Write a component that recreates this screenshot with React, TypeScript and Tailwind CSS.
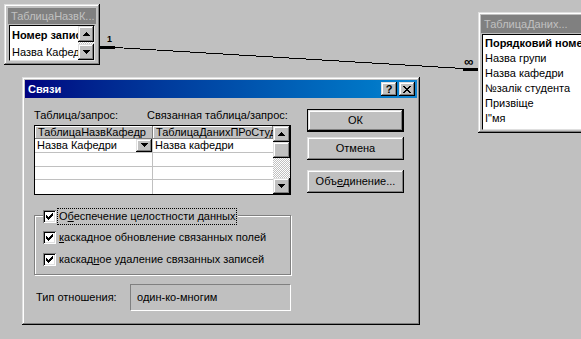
import React from "react"

const raised = "bg-[#c0c0c0] shadow-[inset_-1px_-1px_#000000,inset_1px_1px_#dfdfdf,inset_-2px_-2px_#808080,inset_2px_2px_#ffffff]"
const thin = "bg-[#c0c0c0] shadow-[inset_-1px_-1px_#808080,inset_1px_1px_#ffffff]"
const dither = "bg-[image:repeating-conic-gradient(#ffffff_0%_25%,#c0c0c0_0%_50%)] bg-size-[2px_2px]"

const Arrow = ({ down }: { down?: boolean }) => (
    <svg width="7" height="4" viewBox="0 0 7 4" shapeRendering="crispEdges">
        {[0, 1, 2, 3].map(i => (
            <rect key={i} x={3 - i} y={down ? 3 - i : i} width={1 + 2 * i} height="1" fill="#000" />
        ))}
    </svg>
)

const Check = () => (
    <div className="w-[13px] h-[13px] bg-white shrink-0 shadow-[inset_1px_1px_#808080,inset_-1px_-1px_#ffffff,inset_2px_2px_#000000,inset_-2px_-2px_#dfdfdf] flex items-center justify-center">
        <svg width="7" height="7" viewBox="0 0 7 7" shapeRendering="crispEdges">
            <path d="M0 2h1v3h-1zM1 3h1v3h-1zM2 4h1v3h-1zM3 3h1v3h-1zM4 2h1v3h-1zM5 1h1v3h-1zM6 0h1v3h-1z" fill="#000" />
        </svg>
    </div>
)

const Button = ({ children, primary }: { children: React.ReactNode, primary?: boolean }) => (
    <div className={`w-[97px] h-[23px] ${primary ? 'border border-black' : ''}`}>
        <div className={`w-full h-full flex items-center justify-center ${raised}`}>{children}</div>
    </div>
)

const Line = () => (
    <svg className="absolute inset-0 pointer-events-none" width="581" height="339" shapeRendering="crispEdges">
        <rect x="100" y="46" width="15" height="3" fill="#000" />
        <line x1="115" y1="47.5" x2="463" y2="68.5" stroke="#000" strokeWidth="1" />
        <rect x="463" y="68" width="16" height="3" fill="#000" />
    </svg>
)

const App = () => {
    return (
        <div className="relative w-[581px] h-[339px] overflow-hidden bg-[#c0c0c0] font-['Liberation_Sans',Arial,sans-serif] text-[11px] text-black leading-none">
            <Line />
            <span className="absolute left-[107px] top-[35px] text-[9px] font-bold">1</span>
            <span className="absolute left-[464px] top-[55px] text-[13px] font-bold">∞</span>

            {/* first table */}
            <div className={`absolute left-[4px] top-[4px] w-[96px] h-[61px] p-[4px] flex flex-col ${raised}`}>
                <div className="h-[16px] bg-[#808080] text-[#c0c0c0] flex items-center pl-[3px] whitespace-nowrap overflow-hidden">ТаблицаНазвК...</div>
                <div className="mt-[1px] mx-[1px] h-[36px] bg-white flex border border-t-black border-l-black border-r-[#dfdfdf] border-b-[#dfdfdf]">
                    <div className="flex-1 min-w-0 overflow-hidden whitespace-nowrap pl-[2px] pt-[4px] flex flex-col gap-[6px]">
                        <span className="font-bold">Номер запису</span>
                        <span>Назва Кафедри</span>
                    </div>
                    <div className="w-[16px] shrink-0 flex flex-col">
                        <div className={`h-[16px] flex items-center justify-center ${raised}`}><Arrow /></div>
                        <div className={`flex-1 ${dither}`}></div>
                        <div className={`h-[16px] flex items-center justify-center ${raised}`}><Arrow down /></div>
                    </div>
                </div>
            </div>

            {/* second table */}
            <div className={`absolute left-[478px] top-[12px] w-[115px] h-[121px] p-[3px] flex flex-col ${raised}`}>
                <div className="h-[18px] bg-[#808080] text-[#c0c0c0] flex items-center pl-[3px] whitespace-nowrap overflow-hidden">ТаблицаДаних...</div>
                <div className="mt-[1px] ml-[1px] h-[96px] bg-white border border-t-black border-l-black border-b-[#dfdfdf] overflow-hidden whitespace-nowrap pl-[2px] pt-[3px] flex flex-col gap-[4px]">
                    <span className="font-bold">Порядковий номер</span>
                    <span>Назва групи</span>
                    <span>Назва кафедри</span>
                    <span>№залік студента</span>
                    <span>Призвіще</span>
                    <span>І"мя</span>
                </div>
            </div>

            {/* dialog */}
            <div className={`absolute left-[22px] top-[77px] w-[398px] h-[248px] p-[3px] flex flex-col ${raised}`}>
                <div className="h-[18px] flex items-center pl-[3px] pr-[2px] bg-linear-to-r from-[#000080] to-[#1084d0]">
                    <span className="text-white font-bold">Связи</span>
                    <div className="ml-auto flex gap-[2px]">
                        <div className={`w-[16px] h-[14px] flex items-center justify-center font-bold ${raised}`}>?</div>
                        <div className={`w-[16px] h-[14px] flex items-center justify-center ${raised}`}>
                            <svg width="8" height="7" viewBox="0 0 8 7" shapeRendering="crispEdges">
                                <path d="M0 0h2v1h-2zM6 0h2v1h-2zM1 1h2v1h-2zM5 1h2v1h-2zM2 2h4v1h-4zM3 3h2v1h-2zM2 4h4v1h-4zM1 5h2v1h-2zM5 5h2v1h-2zM0 6h2v1h-2zM6 6h2v1h-2z" fill="#000" />
                            </svg>
                        </div>
                    </div>
                </div>

                <div className="flex-1 flex pl-[9px] pt-[11px]">
                    <div className="w-[257px] shrink-0 flex flex-col">
                        <div className="h-[13px] flex items-center whitespace-nowrap">
                            <span className="w-[113px]">Таблица/запрос:</span>
                            <span>Связанная таблица/запрос:</span>
                        </div>

                        <div className="mt-[3px] h-[70px] border border-black flex bg-white">
                            <div className="flex-1 min-w-0 flex flex-col">
                                <div className="h-[13px] flex">
                                    <div className={`w-[118px] shrink-0 pl-[3px] flex items-center whitespace-nowrap overflow-hidden ${thin}`}>ТаблицаНазвКафедр</div>
                                    <div className={`flex-1 min-w-0 pl-[3px] flex items-center whitespace-nowrap overflow-hidden ${thin}`}>ТаблицаДанихПРоСтудентів</div>
                                </div>
                                <div className="h-[15px] flex border-b border-[#c0c0c0]">
                                    <div className="w-[118px] shrink-0 pl-[2px] flex items-center border-r border-[#c0c0c0]">
                                        <span>Назва Кафедри</span>
                                        <div className={`ml-auto w-[16px] h-[13px] flex items-center justify-center ${raised}`}><Arrow down /></div>
                                    </div>
                                    <div className="flex-1 pl-[2px] flex items-center">Назва кафедри</div>
                                </div>
                                {[0, 1, 2].map(i => (
                                    <div key={i} className="h-[14px] flex border-b border-[#c0c0c0] last:border-b-0">
                                        <div className="w-[118px] shrink-0 border-r border-[#c0c0c0]"></div>
                                        <div className="flex-1"></div>
                                    </div>
                                ))}
                            </div>
                            <div className="w-[17px] shrink-0 flex flex-col">
                                <div className={`h-[16px] flex items-center justify-center ${raised}`}><Arrow /></div>
                                <div className={`h-[16px] ${raised}`}></div>
                                <div className={`flex-1 ${dither}`}></div>
                                <div className={`h-[16px] flex items-center justify-center ${raised}`}><Arrow down /></div>
                            </div>
                        </div>

                        <div className="relative mt-[20px] h-[60px] border border-[#808080] shadow-[1px_1px_#ffffff,inset_1px_1px_#ffffff] pl-[8px] pt-[15px] flex flex-col gap-[9px]">
                            <div className="absolute left-[8px] -top-[7px] flex items-center bg-[#c0c0c0] pr-[2px]">
                                <Check />
                                <span className="ml-[2px] px-[1px] py-[2px] outline-1 outline-dotted outline-black">О<u>б</u>еспечение целостности данных</span>
                            </div>
                            <div className="h-[13px] flex items-center">
                                <Check />
                                <span className="ml-[3px]"><u>к</u>аскадное обновление связанных полей</span>
                            </div>
                            <div className="h-[13px] flex items-center">
                                <Check />
                                <span className="ml-[3px]">каскад<u>н</u>ое удаление связанных записей</span>
                            </div>
                        </div>

                        <div className="mt-[9px] flex items-center">
                            <span className="pl-[2px]">Тип отношения:</span>
                            <div className="ml-auto w-[161px] h-[27px] flex items-center pl-[6px] border border-t-[#808080] border-l-[#808080] border-r-white border-b-white">один-ко-многим</div>
                        </div>
                    </div>

                    <div className="ml-[16px] flex flex-col">
                        <Button primary>ОК</Button>
                        <div className="mt-[5px]"><Button>Отмена</Button></div>
                        <div className="mt-[10px]"><Button>Объ<u>е</u>динение...</Button></div>
                    </div>
                </div>
            </div>
        </div>
    )
}

export default App
